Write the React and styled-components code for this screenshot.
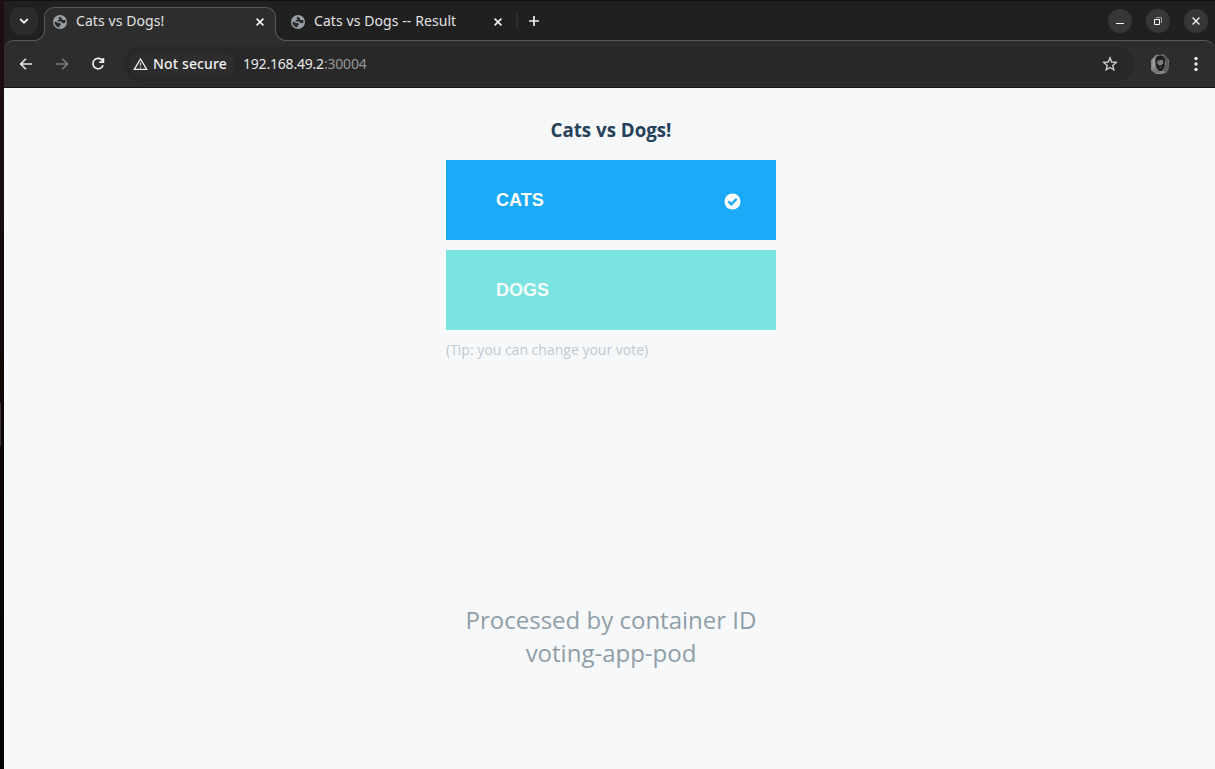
import React from "react";
import styled, { createGlobalStyle } from "styled-components";

const chrome = "#2d2d2d";
const strip = "#202020";
const outline = "#595959";

const GlobalStyle = createGlobalStyle`
  * { box-sizing: border-box; }
  html, body { margin: 0; padding: 0; background: #f7f8fa; overflow: hidden; }
  button { border: 0; padding: 0; background: none; font: inherit; color: inherit; }
  svg { display: block; flex: none; }
`;

const Desktop = styled.div`
  display: flex;
  width: 1215px;
  height: 769px;
  font-family: "Noto Sans", "Open Sans", sans-serif;
`;

const DesktopEdge = styled.div`
  display: flex;
  align-items: flex-start;
  width: 4px;
  padding-top: 403px;
  background: linear-gradient(#1e0e14 0, #1b0c10 160px, #120808 360px, #070505 600px, #040403 769px);
`;

const DockMark = styled.div`
  width: 1px;
  height: 43px;
  background: #383435;
`;

const BrowserWindow = styled.div`
  flex: 1;
  display: flex;
  flex-direction: column;
  min-width: 0;
  background: ${strip};
`;

const TabStrip = styled.div`
  display: flex;
  height: 40px;
  border-top: 1px solid #111;
  color: #e3e3e3;
`;

const TabSearch = styled.button`
  display: grid;
  place-items: center;
  width: 28px;
  height: 28px;
  margin: 6px 6px 0 6px;
  border-radius: 10px;
  background: #2b2b2b;
`;

const Tab = styled.div`
  position: relative;
  z-index: 1;
  display: flex;
  align-items: center;
  width: ${(p) => (p.$active ? 232 : 238)}px;
  height: 34px;
  margin-top: 6px;
  padding: 0 ${(p) => (p.$active ? 11 : 12)}px 5px ${(p) => (p.$active ? 8 : 15)}px;
  border: solid ${(p) => (p.$active ? outline : "transparent")};
  border-width: ${(p) => (p.$active ? "1px 1px 0" : "1px 0 0")};
  border-radius: 10px 10px 0 0;
  background: ${(p) => (p.$active ? chrome : "transparent")};

  &::before,
  &::after {
    content: "";
    display: ${(p) => (p.$active ? "block" : "none")};
    position: absolute;
    bottom: 0;
    width: 11px;
    height: 11px;
  }
  &::before {
    left: -11px;
    background: radial-gradient(circle at 0 0, ${strip} 9.7px, ${outline} 10.2px, ${outline} 10.7px, ${chrome} 11.2px);
  }
  &::after {
    right: -11px;
    background: radial-gradient(circle at 100% 0, ${strip} 9.7px, ${outline} 10.2px, ${outline} 10.7px, ${chrome} 11.2px);
  }
`;

const TabTitle = styled.span`
  flex: 1;
  margin-left: 9px;
  padding-bottom: 2px;
  font-size: 14px;
  line-height: 20px;
  letter-spacing: ${(p) => p.$tracking}px;
  white-space: nowrap;
`;

const TabDivider = styled.div`
  width: 2px;
  height: 16px;
  margin: 12px 10px 0 2px;
  background: #2d2d2d;
`;

const NewTab = styled.button`
  width: 12px;
  height: 12px;
  margin-top: 14px;
`;

const WindowControls = styled.div`
  display: flex;
  gap: 14px;
  margin: 8px 7px 0 auto;
`;

const WindowButton = styled.button`
  display: grid;
  place-items: center;
  width: 24px;
  height: 24px;
  border-radius: 50%;
  background: #373737;
`;

const Toolbar = styled.div`
  display: flex;
  align-items: center;
  height: 47px;
  padding-left: 14px;
  border-top: 1px solid ${outline};
  border-radius: 10px 10px 0 0;
  background: ${chrome};
`;

const Navigation = styled.div`
  display: flex;
  gap: 20px;
  width: 106px;
`;

const AddressBar = styled.div`
  display: flex;
  align-items: center;
  width: 1010px;
  height: 34px;
  padding: 0 16px 0 5px;
  border-radius: 17px;
  background: #282828;
`;

const SecurityChip = styled.div`
  display: flex;
  align-items: center;
  width: 106px;
  height: 24px;
  padding-left: 4px;
  border-radius: 12px;
  background: ${chrome};
  color: #f1f1f1;
`;

const ChipLabel = styled.span`
  margin-left: 5px;
  padding-bottom: 2px;
  font-size: 14px;
  font-weight: 500;
  letter-spacing: 0.14px;
  white-space: nowrap;
`;

const Address = styled.span`
  flex: 1;
  margin-left: 8px;
  padding-bottom: 2px;
  color: #e8e8e8;
  font-size: 14px;
  letter-spacing: -0.2px;
`;

const Port = styled.span`
  color: #969696;
`;

const Profile = styled.div`
  margin: 0 24px 0 16px;
`;

const Page = styled.main`
  flex: 1;
  display: flex;
  flex-direction: column;
  align-items: center;
  border-top: 1px solid #141414;
  background: #f7f8fa;
  font-family: "Open Sans", sans-serif;
`;

const Poll = styled.section`
  display: flex;
  flex-direction: column;
  width: 330px;
  margin: 29px 0 0 3px;
`;

const Heading = styled.h1`
  margin: 0 0 17px;
  color: #254159;
  font-size: 18.72px;
  font-weight: 700;
  line-height: 26px;
  text-align: center;
`;

const Choice = styled.button`
  display: flex;
  align-items: center;
  justify-content: space-between;
  height: 80px;
  margin-bottom: 10px;
  padding: 0 35px 0 50px;
  background: ${(p) => p.$color};
  color: ${(p) => (p.$selected ? "#fff" : "#f4fcfb")};
  font: bold 18px/24px "Liberation Sans", Arial, sans-serif;
  text-align: left;
`;

const Tip = styled.p`
  margin: 0;
  color: #c0c9ce;
  font-size: 14px;
  line-height: 20px;
`;

const ContainerInfo = styled.footer`
  width: 330px;
  margin: 243px 0 0 3px;
  color: #8f9ea8;
  font-size: 24px;
  line-height: 33px;
  text-align: center;
`;

const Globe = () => (
  <svg width="14" height="14" viewBox="0 0 14 14">
    <circle cx="7" cy="7" r="7" fill="#9aa0a6" />
    <path
      d="M7.3 1.5C5.7 1.8 5.4 3 6.1 3.8C6.8 4.5 5.7 5 4.7 5.1L4.6 6.5H7.8C8.7 6.7 8.7 8 9.4 8.2L12.2 8.1C12.6 7.1 12.5 5.7 12.2 5.1H10.4C8.9 5.1 8.8 4 9.2 3.2C8.1 3.1 7.2 2.6 7.3 1.5ZM1.5 6.7C1.4 9.8 3.5 12.1 6.5 12.5V10.8L8.2 9.5L6.9 8.1L4.8 8L3.4 6.8Z"
      fill="#292a2b"
    />
  </svg>
);

const Cross = ({ size = 8, width = 1.7 }) => (
  <svg width={size} height={size} viewBox="0 0 8 8" stroke="#eeeeee" strokeWidth={width}>
    <path d="M.6.6 7.4 7.4M7.4.6.6 7.4" />
  </svg>
);

const Arrow = ({ forward }) => (
  <svg width="16" height="16" viewBox="0 0 16 16" fill="none" stroke={forward ? "#7c7c7c" : "#e8e8e8"} strokeWidth="1.6">
    <path d={forward ? "M2 8H13M8.2 2.7 13.5 8 8.2 13.3" : "M14.2 8H3.2M8 2.7 2.7 8 8 13.3"} />
  </svg>
);

const Reload = () => (
  <svg width="16" height="16" viewBox="0 0 16 16" fill="none" stroke="#eeeeee" strokeWidth="1.7">
    <path d="M12.8 5.2A5.2 5.2 0 1 0 13.1 9.2M13.4 2V6.1H9.2" />
  </svg>
);

const Warning = () => (
  <svg width="15" height="14" viewBox="0 0 15 14" fill="none" stroke="#eeeeee">
    <path d="M7.5 2 13.7 12.4H1.3Z" strokeWidth="1.3" />
    <path d="M7.5 5.3V8.8M7.5 9.8V11.2" strokeWidth="1.3" stroke="#bdbdbd" />
  </svg>
);

const Star = () => (
  <svg width="16" height="16" viewBox="0 0 16 16" fill="none" stroke="#cccccc" strokeWidth="1.4">
    <path d="M8 1.8 9.7 6 14.2 6.4 10.8 9.4 11.8 13.8 8 11.5 4.2 13.8 5.2 9.4 1.8 6.4 6.3 6Z" />
  </svg>
);

const Portrait = () => (
  <svg width="20" height="20" viewBox="0 0 20 20">
    <path d="M6 .8H14L19 6V13L16.5 18.5 12 20H6L1 16V6Z" fill="#858585" />
    <path d="M13 1 18 5 19 12 16 18 13 17 16 10Z" fill="#5a5a5a" />
    <path d="M5.5 8C5 3 7.3 1.5 10.5 1.5S15.7 3.7 15 8.2L14.6 13 12 17H8.5L6 13Z" fill="#202020" />
    <path d="M7.3 6.7 12.8 5.7 13.4 9.2 11.5 11 9 11.3 7.3 9.5Z" fill="#858585" />
    <path d="M7.4 8H9.5M11.2 7.7H13.2" fill="none" stroke="#555555" strokeWidth=".8" />
    <path d="M9.6 13.1H11.3" stroke="#666666" strokeWidth=".9" />
    <path d="M3 15 7 15.2 10 18.5 6 19.4Z" fill="#777777" />
    <path d="M3 5 4.7 4.2 4 14 2.6 13Z" fill="#a5a5a5" />
  </svg>
);

const Menu = () => (
  <svg width="4" height="16" viewBox="0 0 4 16" fill="#eeeeee">
    <circle cx="2" cy="2.5" r="1.7" />
    <circle cx="2" cy="8" r="1.7" />
    <circle cx="2" cy="13.5" r="1.7" />
  </svg>
);

const Check = () => (
  <svg width="17" height="17" viewBox="0 0 17 17" transform="translate(0 1)">
    <circle cx="8.5" cy="8.5" r="8" fill="#ffffff" />
    <path d="m4.3 8.3 3 3 5.4-5.4" fill="none" stroke="#1aaaf8" strokeWidth="2.3" />
  </svg>
);

export default function App() {
  return (
    <Desktop>
      <GlobalStyle />
      <DesktopEdge><DockMark /></DesktopEdge>
      <BrowserWindow>
        <TabStrip>
          <TabSearch aria-label="Search tabs">
            <svg width="10" height="8" viewBox="0 0 10 8" fill="none" stroke="#eeeeee" strokeWidth="1.8">
              <path d="m1.2 2 3.8 3.7L8.8 2" />
            </svg>
          </TabSearch>
          <Tab $active>
            <Globe />
            <TabTitle $tracking={0.08}>Cats vs Dogs!</TabTitle>
            <Cross />
          </Tab>
          <Tab>
            <Globe />
            <TabTitle $tracking={0.08}>Cats vs Dogs -- Result</TabTitle>
            <Cross />
          </Tab>
          <TabDivider />
          <NewTab aria-label="New tab">
            <svg width="12" height="12" viewBox="0 0 12 12" stroke="#eeeeee" strokeWidth="1.7">
              <path d="M1 6H11M6 1V11" />
            </svg>
          </NewTab>
          <WindowControls>
            <WindowButton aria-label="Minimize">
              <svg width="10" height="10" viewBox="0 0 10 10"><path d="M1 7H9V8H1Z" fill="#ffffff" /></svg>
            </WindowButton>
            <WindowButton aria-label="Restore">
              <svg width="10" height="10" viewBox="0 0 10 10" fill="none">
                <path d="M3 1.5H8.5V7" stroke="#9c9c9c" />
                <path d="M1.5 3.5H6.5V8.5H1.5Z" stroke="#ffffff" />
              </svg>
            </WindowButton>
            <WindowButton aria-label="Close"><Cross width={1.4} /></WindowButton>
          </WindowControls>
        </TabStrip>
        <Toolbar>
          <Navigation><Arrow /><Arrow forward /><Reload /></Navigation>
          <AddressBar>
            <SecurityChip><Warning /><ChipLabel>Not secure</ChipLabel></SecurityChip>
            <Address>192.168.49.2<Port>:30004</Port></Address>
            <Star />
          </AddressBar>
          <Profile><Portrait /></Profile>
          <Menu />
        </Toolbar>
        <Page>
          <Poll>
            <Heading>Cats vs Dogs!</Heading>
            <Choice $color="#1aaaf8" $selected>CATS<Check /></Choice>
            <Choice $color="#7ae2df">DOGS</Choice>
            <Tip>(Tip: you can change your vote)</Tip>
          </Poll>
          <ContainerInfo>Processed by container ID<br />voting-app-pod</ContainerInfo>
        </Page>
      </BrowserWindow>
    </Desktop>
  );
}
